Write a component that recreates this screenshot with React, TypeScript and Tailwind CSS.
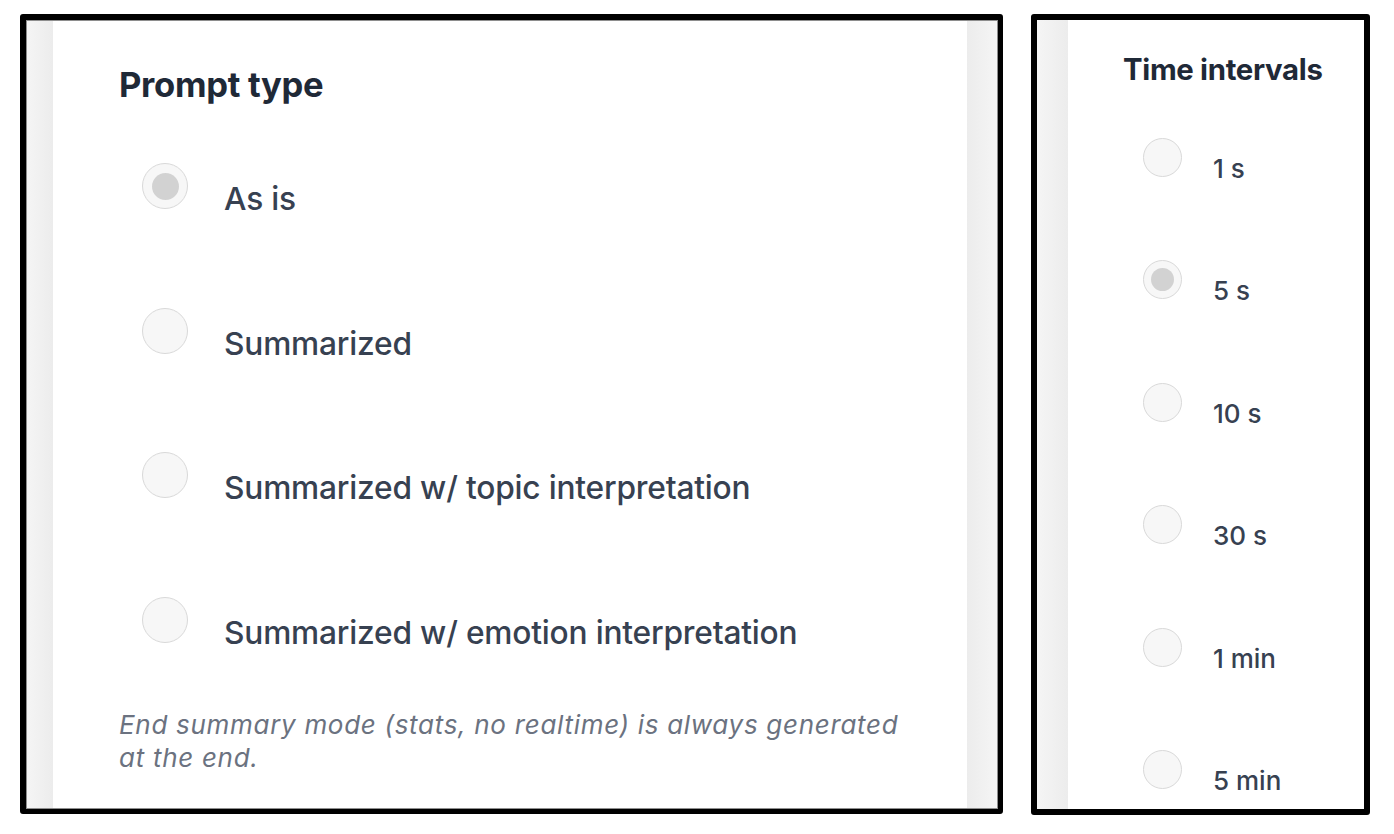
import React from "react";

const Radio = ({ checked, size, dot }: { checked?: boolean; size: string; dot: string }) => (
  <div className={`${size} shrink-0 rounded-full border border-[#d9d9d9] bg-[#f7f7f7] flex items-center justify-center`}>
    {checked && <div className={`${dot} rounded-full bg-[#d2d2d2]`} />}
  </div>
);

const promptTypes = [
  { label: "As is", checked: true },
  { label: "Summarized" },
  { label: "Summarized w/ topic interpretation" },
  { label: "Summarized w/ emotion interpretation" },
];

const intervals = [
  { label: "1 s" },
  { label: "5 s", checked: true },
  { label: "10 s" },
  { label: "30 s" },
  { label: "1 min" },
  { label: "5 min" },
];

export default function App() {
  return (
    <div
      className="w-[1394px] h-[834px] bg-white flex items-start pt-[14px] pl-[20px] gap-[28px]"
      style={{ fontFamily: "Inter, 'Noto Sans', sans-serif" }}
    >
      {/* Left panel */}
      <div className="w-[983px] h-[800px] border-[6px] border-r-[5px] border-b-[5px] border-black rounded-[3px] overflow-hidden">
        <div className="h-full flex border border-[#8e8e8e]">
          <div className="w-[26px] h-full bg-gradient-to-r from-[#f5f5f5] to-[#ececec]" />
          <div className="flex-1 h-full bg-white pl-[66px] pt-[42px] flex flex-col">
            <h2 className="text-[34.6px] leading-[42px] font-bold text-[#1f2937] tracking-[-0.3px]">
              Prompt type
            </h2>
            <div className="mt-[58px] flex flex-col gap-[85.5px] pl-[23px]">
              {promptTypes.map((p) => (
                <div key={p.label} className="flex items-start">
                  <Radio checked={p.checked} size="w-[46px] h-[46px]" dot="w-[27px] h-[27px]" />
                  <span className="ml-[36px] mt-[13px] text-[31.7px] leading-[46px] font-medium text-[#374151] tracking-[-0.2px] whitespace-nowrap">
                    {p.label}
                  </span>
                </div>
              ))}
            </div>
            <p className="mt-[52px] max-w-[800px] text-[26px] leading-[33px] italic tracking-[0.7px] text-[#6b7280]">
              End summary mode (stats, no realtime) is always generated at the end.
            </p>
          </div>
          <div className="w-[30px] h-full bg-gradient-to-r from-[#ececec] to-[#f5f5f5]" />
        </div>
      </div>

      {/* Right panel */}
      <div className="w-[339px] h-[801px] border-[6px] border-black rounded-[3px] overflow-hidden">
        <div className="h-full flex">
          <div className="w-[31px] h-full bg-gradient-to-r from-[#f5f5f5] to-[#ececec]" />
          <div className="flex-1 h-full bg-white pl-[55px] pt-[32px] flex flex-col overflow-hidden">
            <h2 className="text-[29.3px] leading-[36px] font-bold text-[#1f2937] tracking-[-0.3px] whitespace-nowrap">
              Time intervals
            </h2>
            <div className="mt-[50px] flex flex-col gap-[72.4px] pl-[20px]">
              {intervals.map((p) => (
                <div key={p.label} className="flex items-start">
                  <Radio checked={p.checked} size="w-[39px] h-[39px]" dot="w-[23px] h-[23px]" />
                  <span className="ml-[31px] mt-[11px] text-[26px] leading-[39px] font-medium text-[#374151] whitespace-nowrap">
                    {p.label}
                  </span>
                </div>
              ))}
            </div>
          </div>
        </div>
      </div>
    </div>
  );
}
